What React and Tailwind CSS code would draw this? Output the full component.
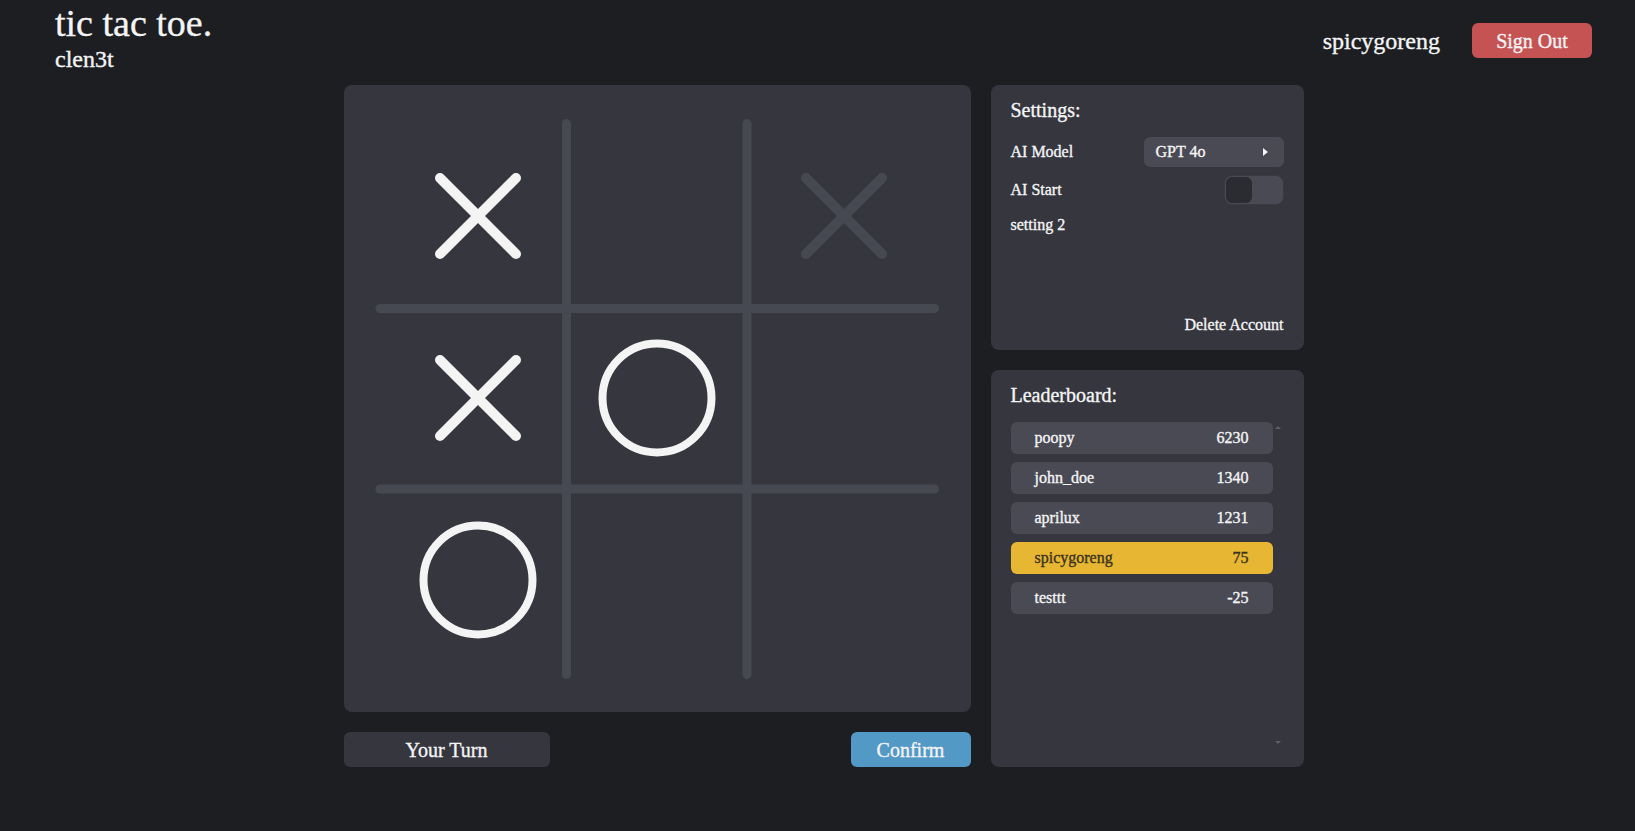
import { useState } from "react"

const initialBoard = [
    ["x", "", "hint"],
    ["x", "o", ""],
    ["o", "", ""],
]

const leaderboard = [
    { name: "poopy", score: 6230 },
    { name: "john_doe", score: 1340 },
    { name: "aprilux", score: 1231 },
    { name: "spicygoreng", score: 75 },
    { name: "testtt", score: -25 },
]

const currentUser = "spicygoreng"

function Cross({ faded }) {
    return (
        <svg width="86" height="86" viewBox="0 0 86 86">
            <g stroke={faded ? "#474952" : "#f4f4f4"} strokeWidth="10" strokeLinecap="round">
                <line x1="5" y1="5" x2="81" y2="81" />
                <line x1="81" y1="5" x2="5" y2="81" />
            </g>
        </svg>
    )
}

function Nought() {
    return (
        <svg width="118" height="118" viewBox="0 0 118 118">
            <circle cx="59" cy="59" r="54.5" fill="none" stroke="#f4f4f4" strokeWidth="8" />
        </svg>
    )
}

function GridLines() {
    return (
        <svg
            className="pointer-events-none absolute inset-0"
            width="627"
            height="627"
            viewBox="0 0 627 627">
            <g stroke="#474952" strokeWidth="9" strokeLinecap="round">
                <line x1="222.5" y1="38.5" x2="222.5" y2="589.5" />
                <line x1="403" y1="38.5" x2="403" y2="589.5" />
                <line x1="36" y1="223.5" x2="590.5" y2="223.5" />
                <line x1="36" y1="404" x2="590.5" y2="404" />
            </g>
        </svg>
    )
}

function Board({ cells }) {
    return (
        <div className="relative h-[627px] w-[627px] rounded-lg bg-[#35363e] pl-[43px] pt-[40px]">
            <GridLines />
            <div className="grid grid-cols-[182px_176px_198px] grid-rows-[182px_182px_182px]">
                {cells.flat().map((cell, i) => (
                    <div key={i} className="flex items-center justify-center">
                        {cell === "x" && <Cross />}
                        {cell === "hint" && <Cross faded />}
                        {cell === "o" && <Nought />}
                    </div>
                ))}
            </div>
        </div>
    )
}

function Settings() {
    const [aiStart, setAiStart] = useState(false)

    return (
        <div className="flex h-[265px] flex-col rounded-lg bg-[#35363e] px-5 pb-[13px] pt-[11px]">
            <h2 className="mb-[13px] text-xl">Settings:</h2>
            <div className="flex flex-col gap-2 text-base">
                <div className="flex items-center justify-between">
                    <span>AI Model</span>
                    <button className="flex h-[30px] w-[140px] items-center justify-between rounded-md bg-[#494a53] pl-3 pr-4">
                        <span>GPT 4o</span>
                        <svg width="5" height="8" viewBox="0 0 5 8">
                            <path d="M0 0 L5 4 L0 8 Z" fill="#f4f4f4" />
                        </svg>
                    </button>
                </div>
                <div className="flex items-center justify-between">
                    <span>AI Start</span>
                    <button
                        className={`flex h-[30px] w-[60px] rounded-lg border border-[#3a3b42] bg-[#494a53] p-[1px] ${aiStart ? "justify-end" : "justify-start"}`}
                        onClick={() => setAiStart(!aiStart)}>
                        <span className="h-[26px] w-[26px] rounded-md bg-[#2b2c31]" />
                    </button>
                </div>
                <div>setting 2</div>
            </div>
            <button className="ml-auto mt-auto text-base">Delete Account</button>
        </div>
    )
}

function Leaderboard() {
    return (
        <div className="flex h-[397px] flex-col rounded-lg bg-[#35363e] pb-[10px] pl-5 pr-5 pt-[11px]">
            <h2 className="mb-[13px] text-xl">Leaderboard:</h2>
            <div className="relative flex-1">
                <div className="h-full overflow-y-auto pr-[11px]">
                    <div className="flex flex-col gap-2">
                        {leaderboard.map((row) => (
                            <div
                                key={row.name}
                                className={`flex h-8 items-center justify-between rounded-md px-6 text-base ${
                                    row.name === currentUser
                                        ? "bg-[#e7b632] text-[#3b3320]"
                                        : "bg-[#494a53]"
                                }`}>
                                <span>{row.name}</span>
                                <span>{row.score}</span>
                            </div>
                        ))}
                    </div>
                </div>
                <span className="absolute right-[3px] top-[4px] h-0 w-0 border-x-[3px] border-b-[3px] border-x-transparent border-b-[#5d5f68]" />
                <span className="absolute bottom-[13px] right-[3px] h-0 w-0 border-x-[3px] border-t-[3px] border-x-transparent border-t-[#5d5f68]" />
            </div>
        </div>
    )
}

export default function App() {
    const [cells] = useState(initialBoard)

    return (
        <div className="min-h-screen bg-[#1d1e22] font-['Liberation_Serif',serif] text-[#f4f4f5] [-webkit-text-stroke:0.35px]">
            <header className="flex items-start justify-between pl-[55px] pr-[43px] pt-[3px]">
                <div>
                    <h1 className="text-[38px] leading-[40px]">tic tac toe.</h1>
                    <div className="text-2xl">clen3t</div>
                </div>
                <div className="mt-[20px] flex items-center gap-8">
                    <span className="text-2xl">{currentUser}</span>
                    <button className="h-[35px] w-[120px] rounded-md bg-[#c65353] text-xl">
                        Sign Out
                    </button>
                </div>
            </header>
            <main className="mt-[10px] flex justify-center pl-[12px]">
                <div className="flex w-[627px] flex-col">
                    <Board cells={cells} />
                    <div className="mt-5 flex justify-between">
                        <div className="flex h-[35px] w-[206px] items-center justify-center rounded-md bg-[#35363e] text-xl">
                            Your Turn
                        </div>
                        <button className="h-[35px] w-[120px] rounded-md bg-[#5299c6] text-xl">
                            Confirm
                        </button>
                    </div>
                </div>
                <div className="ml-5 flex w-[313px] flex-col gap-5">
                    <Settings />
                    <Leaderboard />
                </div>
            </main>
        </div>
    )
}
